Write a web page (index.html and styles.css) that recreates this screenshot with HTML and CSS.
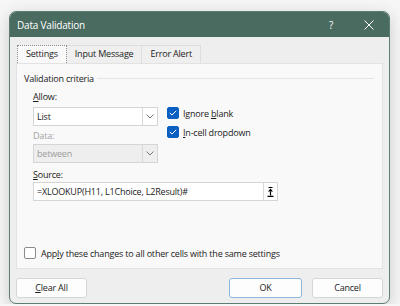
FILE: index.html
```html
<!DOCTYPE html>
<html lang="en">
<head>
    <meta charset="UTF-8">
    <meta name="viewport" content="width=device-width, initial-scale=1.0">
    <title>Data Validation</title>
    <link rel="stylesheet" href="styles.css">
</head>
<body>
    <div class="dialog">
        <div class="titlebar">
            <span class="title">Data Validation</span>
            <span class="help">?</span>
            <span class="close">
                <svg width="10" height="10" viewBox="0 0 10 10">
                    <path d="M0.5 0.5 L9.5 9.5 M9.5 0.5 L0.5 9.5" stroke="#ffffff" stroke-width="1" fill="none"/>
                </svg>
            </span>
        </div>

        <div class="dialog-body">
            <div class="tabs">
                <div class="tab active">Settings</div>
                <div class="tab">Input Message</div>
                <div class="tab">Error Alert</div>
            </div>

            <div class="panel">
                <div class="group-title"><span>Validation criteria</span></div>

                <div class="criteria">
                    <div class="field-col">
                        <div class="label"><u>A</u>llow:</div>
                        <div class="combo">
                            <span class="combo-text">List</span>
                            <span class="combo-drop">
                                <svg width="8" height="5" viewBox="0 0 8 5"><path d="M0.5 0.5 L4 4 L7.5 0.5" stroke="#7a7a7a" fill="none"/></svg>
                            </span>
                        </div>
                        <div class="label disabled">Data:</div>
                        <div class="combo disabled">
                            <span class="combo-text">between</span>
                            <span class="combo-drop">
                                <svg width="8" height="5" viewBox="0 0 8 5"><path d="M0.5 0.5 L4 4 L7.5 0.5" stroke="#7a7a7a" fill="none"/></svg>
                            </span>
                        </div>
                    </div>

                    <div class="check-col">
                        <div class="check-row">
                            <span class="checkbox checked">
                                <svg width="8" height="6" viewBox="0 0 8 6"><path d="M0.8 3 L3 5 L7.2 0.8" stroke="#ffffff" fill="none"/></svg>
                            </span>
                            <span>Ignore <u>b</u>lank</span>
                        </div>
                        <div class="check-row">
                            <span class="checkbox checked">
                                <svg width="8" height="6" viewBox="0 0 8 6"><path d="M0.8 3 L3 5 L7.2 0.8" stroke="#ffffff" fill="none"/></svg>
                            </span>
                            <span><u>I</u>n-cell dropdown</span>
                        </div>
                    </div>
                </div>

                <div class="source-block">
                    <div class="label"><u>S</u>ource:</div>
                    <div class="source">
                        <span class="source-text">=XLOOKUP(H11, L1Choice, L2Result)#</span>
                        <span class="source-btn">
                            <svg width="7" height="10" viewBox="0 0 7 10">
                                <path d="M1.5 0.5 H5.5" stroke="#000" stroke-width="1"/>
                                <path d="M3.5 1.5 L6 4.5 H1 Z" fill="#000"/>
                                <path d="M3.5 4.5 V8.5" stroke="#000" stroke-width="1.2"/>
                                <path d="M0.5 9.3 H6.5" stroke="#000" stroke-width="1.2"/>
                            </svg>
                        </span>
                    </div>
                </div>

                <div class="check-row apply">
                    <span class="checkbox"></span>
                    <span>App<u>l</u>y these changes to all other cells with the same settings</span>
                </div>
            </div>

            <div class="buttons">
                <div class="btn"><u>C</u>lear All</div>
                <div class="btn default">OK</div>
                <div class="btn">Cancel</div>
            </div>
        </div>
    </div>
</body>
</html>
```

FILE: styles.css
```css
* {
    margin: 0;
    padding: 0;
    box-sizing: border-box;
}

body {
    font-family: 'Open Sans', 'Noto Sans', sans-serif;
    font-size: 9px;
    letter-spacing: -0.2px;
    color: #1b1b1b;
    background: #f6f6f6;
    padding: 11px 0 0 9px;
    overflow: hidden;
}

u {
    text-decoration: underline;
    text-underline-offset: 1px;
}

.dialog {
    width: 381px;
    height: 293px;
    border: 1px solid #5c7d71;
    border-radius: 7px;
    overflow: hidden;
    background: #eeeeee;
    box-shadow: 0 4px 16px rgba(0, 0, 0, 0.18);
    display: flex;
    flex-direction: column;
}

.titlebar {
    height: 25px;
    background: #4a6b5f;
    color: #ffffff;
    display: flex;
    align-items: center;
    padding-left: 7px;
    flex-shrink: 0;
}

.title {
    font-size: 10px;
    flex: 1;
}

.help {
    font-size: 10px;
    margin-right: 31px;
}

.close {
    display: flex;
    margin-right: 15px;
}

.dialog-body {
    flex: 1;
    display: flex;
    flex-direction: column;
    padding: 8px 6px 5px;
}

.tabs {
    display: flex;
    height: 18px;
    margin-left: 1px;
}

.tab {
    height: 18px;
    line-height: 16px;
    padding: 0 8px;
    border: 1px solid #dedede;
    border-bottom: none;
    border-left: none;
    background: #efefef;
    color: #222;
}

.tab.active {
    background: #f9f9f9;
    border: 1px dotted #8c8c8c;
    border-bottom: none;
}

.panel {
    height: 206px;
    background: #f9f9f9;
    border: 1px solid #e2e2e2;
    padding: 7px 8px 8px 7px;
    display: flex;
    flex-direction: column;
}

.group-title {
    display: flex;
    align-items: center;
    height: 14px;
}

.group-title::after {
    content: "";
    flex: 1;
    height: 1px;
    background: #e4e4e4;
    margin-left: 3px;
}

.criteria {
    display: flex;
    padding-left: 9px;
    margin-top: 5px;
}

.field-col {
    width: 125px;
}

.label {
    height: 14px;
    line-height: 14px;
}

.label.disabled {
    color: #a3a3a3;
    margin-top: 3px;
}

.combo {
    height: 19px;
    border: 1px solid #d5d5d5;
    background: #ffffff;
    display: flex;
    margin-top: 3px;
}

.combo.disabled {
    background: #eeeeee;
    color: #9c9c9c;
    margin-top: 1px;
}

.combo-text {
    flex: 1;
    line-height: 17px;
    padding-left: 3px;
}

.combo-drop {
    width: 15px;
    border-left: 1px solid #d9d9d9;
    display: flex;
    align-items: center;
    justify-content: center;
}

.check-col {
    margin-left: 9px;
    margin-top: 16px;
    display: flex;
    flex-direction: column;
    gap: 5px;
}

.check-row {
    display: flex;
    align-items: center;
    height: 14px;
    gap: 4px;
}

.checkbox {
    width: 12px;
    height: 12px;
    border: 1px solid #8a8a8a;
    border-radius: 2px;
    background: #ffffff;
    display: flex;
    align-items: center;
    justify-content: center;
}

.checkbox.checked {
    background: #0b5fc2;
    border-color: #0b5fc2;
}

.source-block {
    padding-left: 9px;
    margin-top: 5px;
}

.source {
    width: 245px;
    height: 19px;
    border: 1px solid #d5d5d5;
    background: #ffffff;
    display: flex;
}

.source-text {
    flex: 1;
    line-height: 17px;
    padding-left: 3px;
}

.source-btn {
    width: 14px;
    border-left: 1px solid #d9d9d9;
    display: flex;
    align-items: center;
    justify-content: center;
}

.apply {
    margin-top: auto;
    gap: 5px;
}

.buttons {
    display: flex;
    gap: 10px;
    margin-top: 9px;
}

.btn {
    width: 71px;
    height: 20px;
    line-height: 18px;
    text-align: center;
    background: #fdfdfd;
    border: 1px solid #d6d6d6;
    border-radius: 3px;
}

.btn:first-child {
    margin-right: auto;
}

.btn.default {
    width: 73px;
    border-color: #8db6dd;
}
```
